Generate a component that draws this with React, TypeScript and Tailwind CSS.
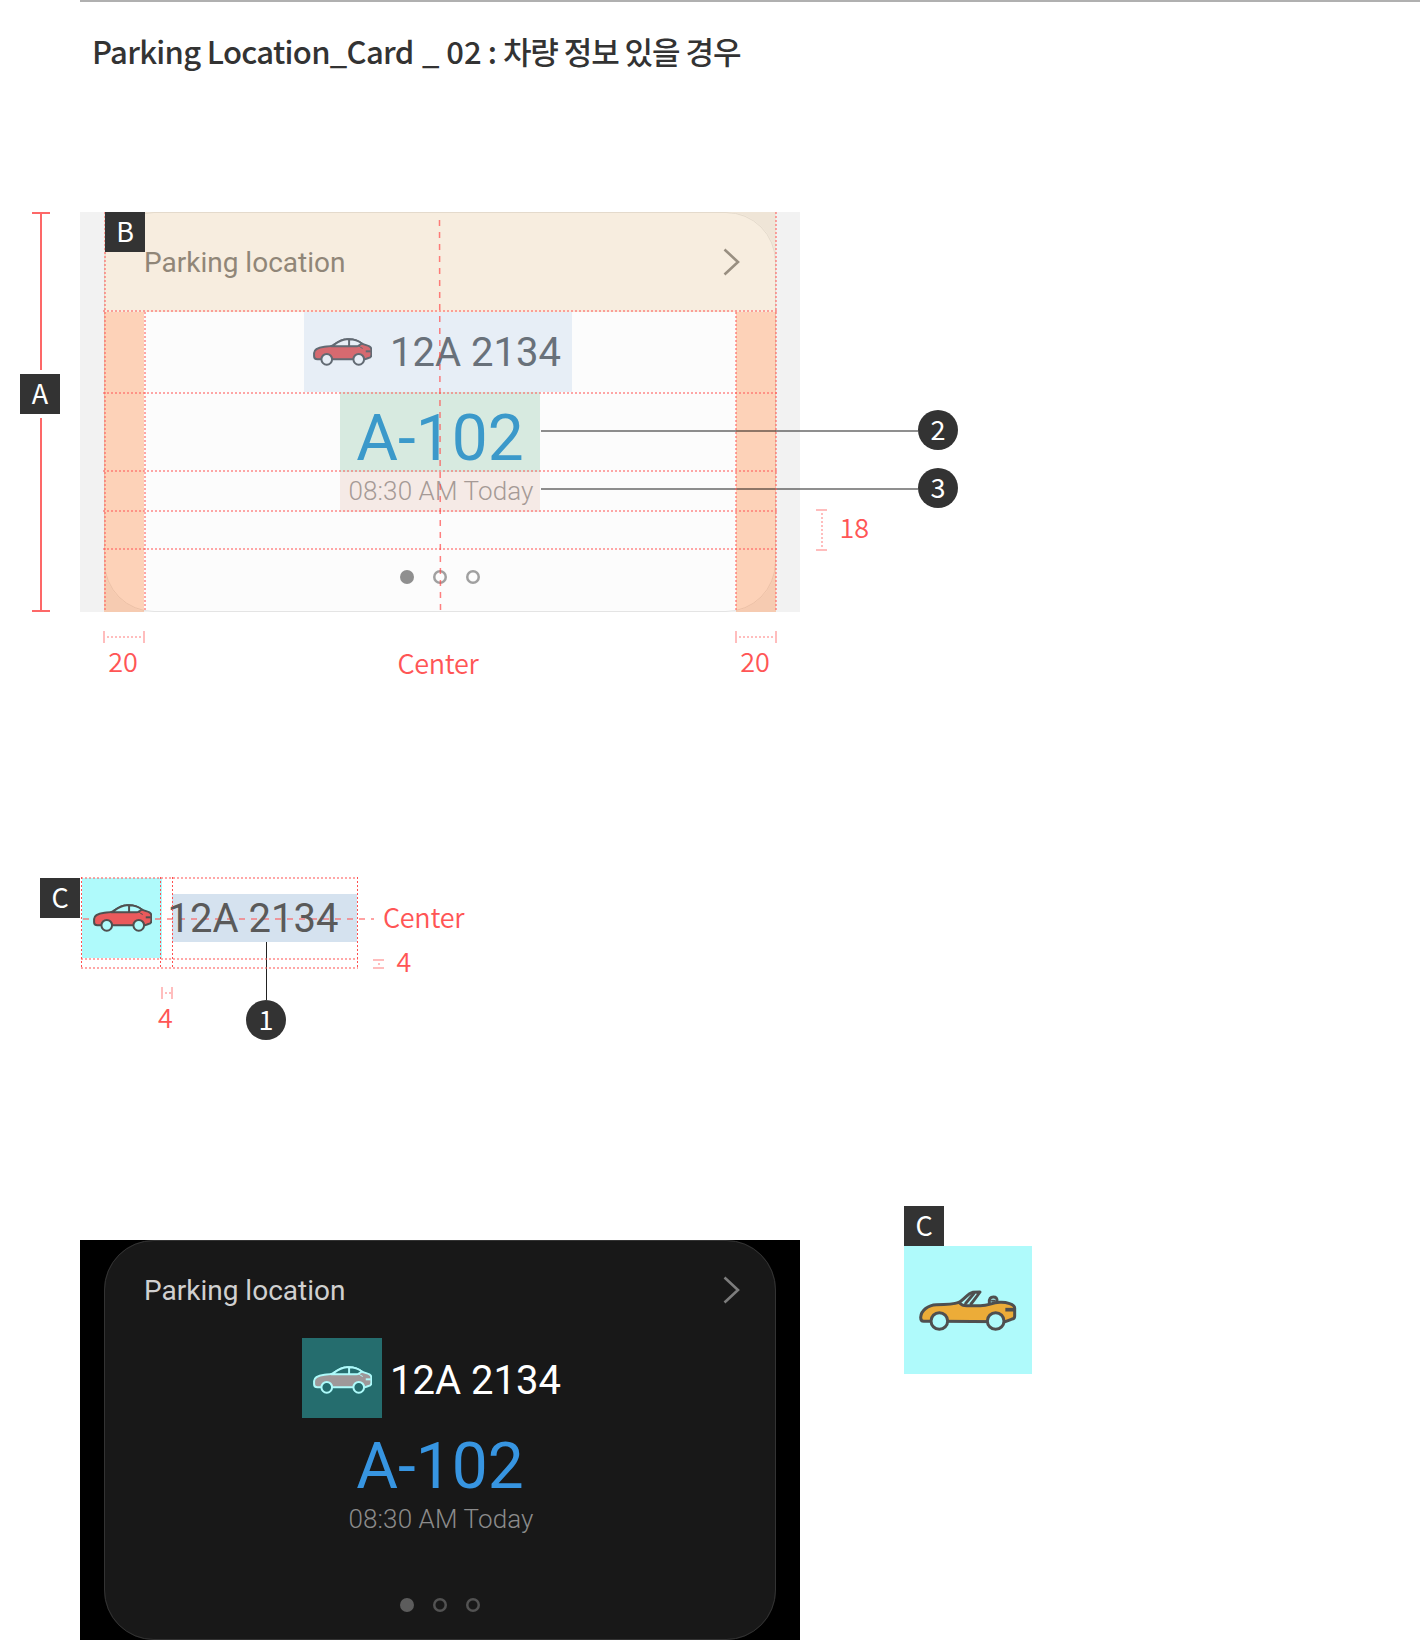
import React from "react";

const LABEL = "font-['Noto_Sans_CJK_KR','Noto_Sans',sans-serif]";

type CarProps = { line: string; body: string; hole: string };

function Sedan({ line, body, hole }: CarProps) {
  return (
    <svg viewBox="188 131 178 84" className="h-[28px] w-[59.5px]" fill="none" stroke={line} strokeWidth="6" strokeLinejoin="round" strokeLinecap="round">
      <path
        d="M229 195H201Q191 195 191 186V176C191 163 206 159 222 157C234 156 242 156 248 153C261 144 271 136 288 135C311 133 323 138 335 148C344 152 351 153 357 156Q363 159 363 167V181Q363 190 354 191L343 195Z"
        fill={body}
      />
      <path d="M248 153C261 144 271 136 288 135C311 133 323 138 335 149L325 155H248Z" fill={hole} stroke="none" />
      <path d="M242 156H318Q323 156 326 153L333 149M296 136V155M248 153C261 144 271 136 288 135C311 133 323 138 335 148" />
      <path d="M326 155Q330 160 336 162" strokeWidth="3" />
      <path d="M346 171H361" strokeLinecap="butt" />
      <circle cx="229" cy="195" r="16" fill={hole} />
      <circle cx="325" cy="195" r="16" fill={hole} />
    </svg>
  );
}

function Convertible() {
  return (
    <svg viewBox="84 298 294 128" className="h-[42.7px] w-[98px]" fill="none" stroke="#4f4f4f" strokeWidth="9" strokeLinejoin="round" strokeLinecap="round">
      <path
        d="M145 395H98Q89 395 89 383C90 362 112 346 136 345C165 345 184 345 204 338C212 347 216 348 228 348H268C295 348 298 340 326 338C345 337 371 343 371 355V380Q371 388 361 389L343 396Z"
        fill="#ecac38"
      />
      <path d="M204 338C217 331 231 311 246 308C253 307 260 307 267 307C258 320 249 331 240 343" />
      <path d="M248 312L224 341" />
      <path d="M295 340C294 326 299 322 307 322C315 322 319 325 318 335" />
      <path d="M303 333H311" strokeWidth="6" />
      <path d="M343 360H370" strokeWidth="11" strokeLinecap="butt" />
      <circle cx="145" cy="394" r="25" fill="#affafb" />
      <circle cx="314" cy="394" r="25" fill="#affafb" />
    </svg>
  );
}

function Badge({ children, className = "" }: { children: string; className?: string }) {
  return (
    <div className={`flex h-10 w-10 shrink-0 items-center justify-center bg-[#333] text-white ${className}`}>
      <span className={`${LABEL} text-[27px] leading-[38px] pb-[2px]`}>{children}</span>
    </div>
  );
}

function Pin({ children }: { children: string }) {
  return (
    <div className="flex h-10 w-10 shrink-0 items-center justify-center rounded-full bg-[#333] text-white">
      <span className={`${LABEL} pb-[2px] text-[27px] leading-[38px]`}>{children}</span>
    </div>
  );
}

function Note({ children, className = "" }: { children: string; className?: string }) {
  return <span className={`${LABEL} whitespace-nowrap text-[27px] font-[350] leading-10 text-[#ff5555] ${className}`}>{children}</span>;
}

function DotsH({ className = "" }: { className?: string }) {
  return <div className={`h-[2px] w-full shrink-0 bg-[repeating-linear-gradient(90deg,#ff5a5a88_0_2px,transparent_2px_4px)] ${className}`} />;
}

function DotsV() {
  return <div className="h-full w-[2px] shrink-0 bg-[repeating-linear-gradient(180deg,#ff5a5a88_0_2px,transparent_2px_4px)]" />;
}

function FineV({ className = "" }: { className?: string }) {
  return <div className={`h-full w-px shrink-0 bg-[repeating-linear-gradient(180deg,#ff5050_0_2px,transparent_2px_4px)] ${className}`} />;
}

/* Horizontal measure: end ticks joined by a dotted rule */
function SpanH({ className }: { className: string }) {
  return (
    <div className={`flex h-3 items-center border-x-2 border-[#ff5a5a66] ${className}`}>
      <div className="h-[2px] flex-1 bg-[repeating-linear-gradient(90deg,transparent_0_2px,#ff5a5a66_2px_4px)]" />
    </div>
  );
}

/* Vertical measure */
function SpanV({ className }: { className: string }) {
  return (
    <div className={`flex w-[11px] shrink-0 justify-center border-y-2 border-[#ff5a5a66] ${className}`}>
      <div className="w-[2px] bg-[repeating-linear-gradient(180deg,transparent_0_2px,#ff5a5a66_2px_4px)]" />
    </div>
  );
}

type Theme = {
  outer: string;
  card: string;
  title: string;
  arrow: string;
  plate: string;
  spot: string;
  time: string;
  timeRow: string;
  spotRow: string;
  plateRow: string;
  iconBox: string;
  dotOn: string;
  dotOff: string;
  car: CarProps;
};

const light: Theme = {
  outer: "bg-[#f2f2f2]",
  card: "bg-[#fcfcfc] border-[#e4e4e4]",
  title: "text-[#7b7b7b]",
  arrow: "text-[#868686]",
  plate: "text-[#69717a]",
  spot: "text-[#3b99ca]",
  time: "text-[#a59a96]",
  timeRow: "bg-[#f5eae6]",
  spotRow: "bg-[#d7eae0]",
  plateRow: "bg-[#e7eef6]",
  iconBox: "",
  dotOn: "bg-[#8f8f8f]",
  dotOff: "shadow-[inset_0_0_0_2.5px_#a0a0a0]",
  car: { line: "#626a73", body: "#d66a70", hole: "#e7eef6" },
};

const dark: Theme = {
  outer: "bg-black",
  card: "bg-[#181818] border-[#333]",
  title: "text-[#d0d0d0]",
  arrow: "text-[#7c7c7c]",
  plate: "text-white",
  spot: "text-[#3795e1]",
  time: "text-[#8b8b8b]",
  timeRow: "",
  spotRow: "",
  plateRow: "",
  iconBox: "bg-[#256d6e] -mt-[4px] pt-[3px]",
  dotOn: "bg-[#5c5c5c]",
  dotOff: "shadow-[inset_0_0_0_2.5px_#525252]",
  car: { line: "#aefafa", body: "#9e9899", hole: "#256d6e" },
};

function ParkingCard({ t }: { t: Theme }) {
  return (
    <div className={`h-[400px] w-[720px] px-6 font-[Roboto,sans-serif] ${t.outer}`}>
      <div className={`relative h-full rounded-[50px] ${t.card}`}>
        <div className="flex h-[100px] items-center justify-between pl-10 pr-[36px]">
          <span className={`pt-[2px] text-[28px] leading-none ${t.title}`}>Parking location</span>
          <svg viewBox="0 0 17 28" className={`h-7 w-[17px] ${t.arrow}`} fill="none" stroke="currentColor" strokeWidth="2.6">
            <path d="M1.5 1.5L15 14L1.5 26.5" />
          </svg>
        </div>
        <div className={`ml-[200px] flex h-20 w-[268px] items-center ${t.plateRow}`}>
          <div className={`-ml-[2px] flex h-20 w-20 shrink-0 items-center justify-center pl-px ${t.iconBox}`}>
            <Sedan {...t.car} />
          </div>
          <span className={`ml-2 whitespace-nowrap pt-[2px] text-[40px] leading-none ${t.plate}`}>12A 2134</span>
        </div>
        <div className={`ml-[236px] flex h-20 w-[200px] items-center justify-center pt-[13px] ${t.spotRow}`}>
          <span className={`text-[64px] leading-none ${t.spot}`}>A-102</span>
        </div>
        <div className={`ml-[236px] flex h-10 w-[200px] items-center justify-center ${t.timeRow}`}>
          <span className={`whitespace-nowrap pb-[2px] pl-[2px] text-[26px] font-light leading-none tracking-[0.12px] ${t.time}`}>08:30 AM Today</span>
        </div>
        <div className="flex justify-center gap-[19px] pt-[58px]">
          <i className={`h-[14px] w-[14px] rounded-full ${t.dotOn}`} />
          <i className={`h-[14px] w-[14px] rounded-full ${t.dotOff}`} />
          <i className={`h-[14px] w-[14px] rounded-full ${t.dotOff}`} />
        </div>
        <div className={`absolute inset-0 rounded-[50px] border !bg-transparent ${t.card}`} />
      </div>
    </div>
  );
}

function Callout({ children }: { children: string }) {
  return (
    <div className="flex h-10 w-[417px] items-center">
      <div className="mt-[2px] h-[2px] flex-1 bg-[#00000070]" />
      <Pin>{children}</Pin>
    </div>
  );
}

/* Padding tints, guide lines and callouts drawn over the light card */
function CardOverlay() {
  return (
    <>
      <div className="absolute inset-y-0 inset-x-6 flex flex-col">
        <div className="h-[100px] bg-[#e4b26c33]" />
        <div className="flex flex-1 justify-between">
          <div className="w-10 bg-[#ff70194d]" />
          <div className="w-10 bg-[#ff70194d]" />
        </div>
      </div>
      <div className="absolute inset-0 flex flex-col pl-[461px] pt-[198px]">
        <Callout>2</Callout>
        <div className="h-[18px]" />
        <Callout>3</Callout>
      </div>
      <div className="absolute inset-0 flex flex-col px-[23px] pt-[98px]">
        <DotsH />
        <DotsH className="mt-20" />
        <DotsH className="mt-[76px]" />
        <DotsH className="mt-[38px]" />
        <DotsH className="mt-9" />
      </div>
      <div className="absolute inset-0 flex justify-between pb-px pl-6 pr-[23px]">
        <DotsV />
        <svg viewBox="0 0 6 392" className="mt-2 h-[392px] w-[6px]">
          <path d="M1.5 0L2.5 392" stroke="#ff4a4a" strokeOpacity=".7" strokeWidth="1.5" strokeDasharray="6 6" />
        </svg>
        <DotsV />
      </div>
      <div className="absolute inset-0 flex justify-between pb-px pl-16 pr-[63px] pt-[100px]">
        <DotsV />
        <DotsV />
      </div>
      <Badge className="absolute left-[25px] top-0">B</Badge>
    </>
  );
}

function LightSpec() {
  return (
    <section className="h-[666px]">
      <div className="flex items-start">
        <div className="flex h-[400px] w-20 flex-col items-center pl-[2px]">
          <div className="h-[2px] w-[18px] bg-[#fd6868]" />
          <div className="h-[156px] w-[2px] bg-[#fd6868]" />
          <Badge className="my-1 mr-[2px]">A</Badge>
          <div className="w-[2px] flex-1 bg-[#fd6868]" />
          <div className="h-[2px] w-[18px] bg-[#fd6868]" />
        </div>
        <div className="relative">
          <ParkingCard t={light} />
          <CardOverlay />
        </div>
        <div className="flex gap-[12.5px] pl-4 pt-[297px]">
          <SpanV className="h-[42px]" />
          <Note className="-mt-[2px] h-10">18</Note>
        </div>
      </div>
      <div className="flex w-[777px] items-start justify-between pl-[103px] pt-[19px]">
        <div className="flex flex-col items-center">
          <SpanH className="w-[42px]" />
          <Note className="-mt-[2px] pr-[2px]">20</Note>
        </div>
        <Note className="mt-3 pr-[4px] tracking-[-0.3px]">Center</Note>
        <div className="flex flex-col items-center">
          <SpanH className="w-[42px]" />
          <Note className="-mt-[2px] pr-[2px]">20</Note>
        </div>
      </div>
    </section>
  );
}

function PlateSpec() {
  return (
    <section className="flex h-[328px] items-start pl-10">
      <Badge>C</Badge>
      <div className="w-[277px] pl-[2px]">
        <div className="relative flex h-20 items-center">
          <div className="h-20 w-20 bg-[#affafb]" />
          <div className="ml-[10px] h-12 w-[185px] bg-[#d5e2ef]" />
          <div className="absolute inset-0 flex items-center pl-px pt-px">
            <div className="h-[2px] w-[291px] shrink-0 bg-[repeating-linear-gradient(90deg,#ff5a5a90_0_6px,transparent_6px_12px)]" />
          </div>
          <div className="absolute inset-0 flex items-center">
            <div className="flex h-20 w-20 items-center justify-center pl-px">
              <Sedan line="#4f4f4f" body="#ea5a5c" hole="#affafb" />
            </div>
            <span className="ml-[5.5px] whitespace-nowrap pt-[2px] font-[Roboto,sans-serif] text-[40px] leading-none text-[#5a5a5a]">12A 2134</span>
          </div>
          <div className="absolute -left-px -top-px flex w-[277px] flex-col">
            <DotsH />
            <DotsH className="mt-[79px]" />
            <DotsH className="mt-[7px]" />
          </div>
          <div className="absolute -left-px -top-px flex h-[91px]">
            <FineV />
            <FineV className="ml-[78px]" />
            <FineV className="ml-[11px]" />
            <FineV className="ml-[184px]" />
          </div>
        </div>
        <div className="flex items-start pl-[79px]">
          <div className="flex w-3 flex-col items-center pt-[29px]">
            <SpanH className="w-3" />
            <Note className="-mt-[2px] pr-[3px]">4</Note>
          </div>
          <div className="-mt-4 ml-[73px] flex w-10 flex-col items-center">
            <div className="h-[58px] w-px bg-[#222]" />
            <Pin>1</Pin>
          </div>
        </div>
      </div>
      <div className="pl-4 pt-[19px]">
        <Note className="block pl-[10px] tracking-[-0.3px]">Center</Note>
        <div className="flex items-start gap-[12.5px] pt-[4px]">
          <SpanV className="mt-[18px] h-[10px]" />
          <Note>4</Note>
        </div>
      </div>
    </section>
  );
}

export default function App() {
  return (
    <main className="h-[1640px] w-[1420px] overflow-hidden bg-white">
      <header className="h-[212px] pl-20">
        <div className="h-[2px] bg-[#b0b0b0]" />
        <h1 className={`${LABEL} flex whitespace-pre pl-3 pt-[28px] text-[31px] font-medium leading-[42px] text-[#333]`}>
          <span className="tracking-[-0.68px]">Parking Location_Card </span>
          <span className="pl-[2px]">_ 02</span>
          <span className="pl-[6px]">:</span>
          <span className="pl-[6px] tracking-[-1.05px]">차량 정보 있을 경우</span>
        </h1>
      </header>
      <LightSpec />
      <PlateSpec />
      <section className="flex h-[434px] items-start pl-20">
        <div className="pt-[34px]">
          <ParkingCard t={dark} />
        </div>
        <div className="ml-[104px]">
          <Badge>C</Badge>
          <div className="flex h-32 w-32 items-center justify-center bg-[#affafb]">
            <Convertible />
          </div>
        </div>
      </section>
    </main>
  );
}
